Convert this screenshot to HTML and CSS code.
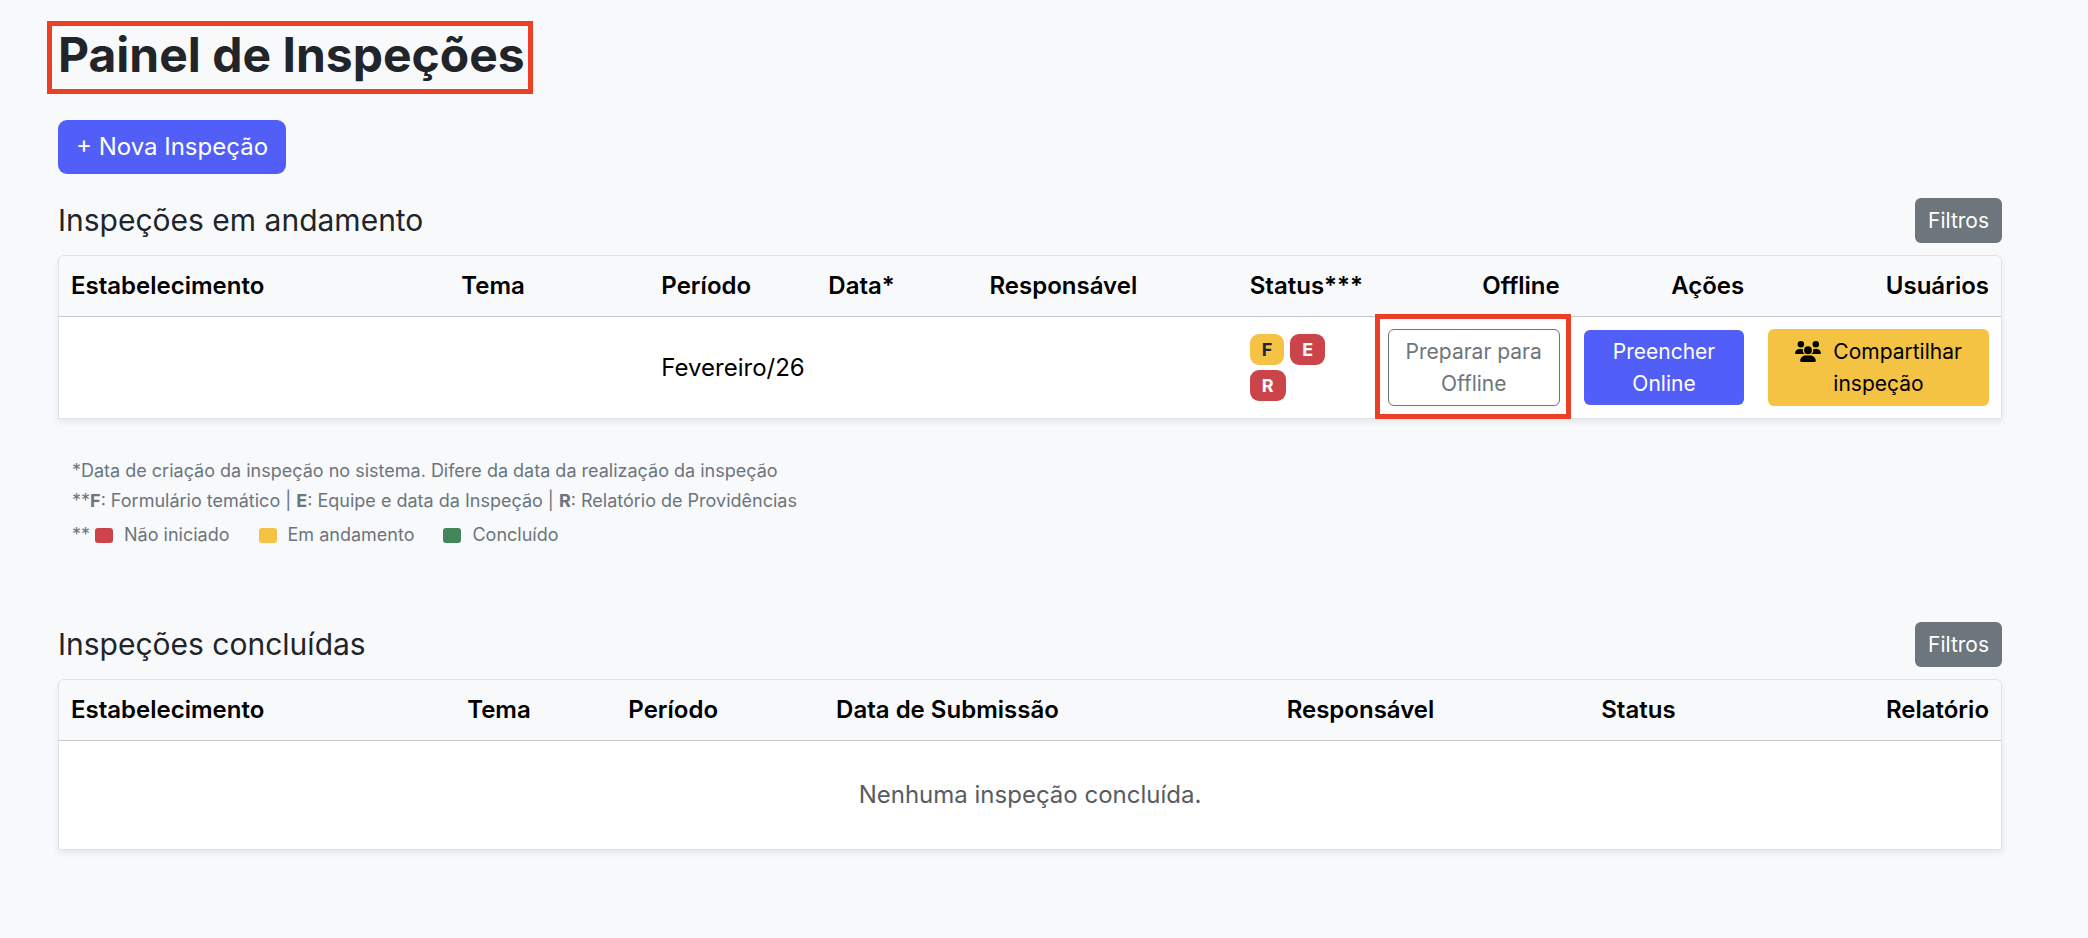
FILE: index.html
```html
<!DOCTYPE html>
<html lang="pt-BR">
<head>
<meta charset="utf-8">
<meta name="viewport" content="width=device-width, initial-scale=1">
<title>Painel de Inspeções</title>
<link rel="stylesheet" href="styles.css">
</head>
<body>
<main class="page">
  <h1 class="page-title">Painel de Inspeções</h1>
  <div><button type="button" class="btn btn-primary btn-lg">+ Nova Inspeção</button></div>

  <section class="panel">
    <header class="panel-head">
      <h2 class="panel-title" id="ongoing">Inspeções em andamento</h2>
      <button type="button" class="btn btn-secondary">Filtros</button>
    </header>
    <table class="grid" aria-labelledby="ongoing">
      <colgroup>
        <col class="a-place"><col class="a-theme"><col class="a-period"><col class="a-date"><col class="a-owner"><col class="a-status"><col class="a-offline"><col class="a-actions"><col>
      </colgroup>
      <thead>
        <tr>
          <th scope="col">Estabelecimento</th>
          <th scope="col">Tema</th>
          <th scope="col">Período</th>
          <th scope="col">Data*</th>
          <th scope="col">Responsável</th>
          <th scope="col">Status***</th>
          <th scope="col" class="end">Offline</th>
          <th scope="col" class="end">Ações</th>
          <th scope="col" class="end">Usuários</th>
        </tr>
      </thead>
      <tbody>
        <tr>
          <td></td>
          <td></td>
          <td>Fevereiro/26</td>
          <td></td>
          <td></td>
          <td>
            <div class="badges">
              <span class="badge warning">F</span>
              <span class="badge danger">E</span>
              <span class="badge danger">R</span>
            </div>
          </td>
          <td><div class="highlight"><button type="button" class="btn btn-outline btn-block">Preparar para Offline</button></div></td>
          <td><button type="button" class="btn btn-primary btn-block">Preencher Online</button></td>
          <td>
            <button type="button" class="btn btn-warning btn-block btn-share">
              <svg class="icon" viewBox="0 0 640 512" aria-hidden="true"><path fill="currentColor" d="M144 0a80 80 0 1 1 0 160A80 80 0 1 1 144 0zM512 0a80 80 0 1 1 0 160A80 80 0 1 1 512 0zM0 298.7C0 239.8 47.8 192 106.7 192h42.7c15.9 0 31 3.5 44.6 9.7c-1.3 7.2-1.9 14.7-1.9 22.3c0 38.2 16.8 72.5 43.3 96c-.2 0-.4 0-.7 0H21.3C9.6 320 0 310.4 0 298.7zM405.3 320c-.2 0-.4 0-.7 0c26.6-23.5 43.3-57.8 43.3-96c0-7.6-.7-15-1.9-22.3c13.6-6.3 28.7-9.7 44.6-9.7h42.7C592.2 192 640 239.8 640 298.7c0 11.8-9.6 21.3-21.3 21.3H405.3zM224 224a96 96 0 1 1 192 0 96 96 0 1 1 -192 0zM128 485.3C128 411.7 187.7 352 261.3 352H378.7C452.3 352 512 411.7 512 485.3c0 14.7-11.9 26.7-26.7 26.7H154.7c-14.7 0-26.7-11.9-26.7-26.7z"/></svg>
              <span>Compartilhar<br>inspeção</span>
            </button>
          </td>
        </tr>
      </tbody>
    </table>
    <div class="notes">
      <p>*Data de criação da inspeção no sistema. Difere da data da realização da inspeção</p>
      <p>**<b>F</b>: Formulário temático | <b>E</b>: Equipe e data da Inspeção | <b>R</b>: Relatório de Providências</p>
      <div class="legend">
        <span class="legend-mark">**</span>
        <span class="legend-item"><i class="swatch danger"></i>Não iniciado</span>
        <span class="legend-item"><i class="swatch warning"></i>Em andamento</span>
        <span class="legend-item"><i class="swatch success"></i>Concluído</span>
      </div>
    </div>
  </section>

  <section class="panel">
    <header class="panel-head">
      <h2 class="panel-title" id="finished">Inspeções concluídas</h2>
      <button type="button" class="btn btn-secondary">Filtros</button>
    </header>
    <table class="grid" aria-labelledby="finished">
      <colgroup>
        <col class="b-place"><col class="b-theme"><col class="b-period"><col class="b-date"><col class="b-owner"><col class="b-status"><col>
      </colgroup>
      <thead>
        <tr>
          <th scope="col">Estabelecimento</th>
          <th scope="col">Tema</th>
          <th scope="col">Período</th>
          <th scope="col">Data de Submissão</th>
          <th scope="col">Responsável</th>
          <th scope="col">Status</th>
          <th scope="col" class="end">Relatório</th>
        </tr>
      </thead>
      <tbody>
        <tr><td colspan="7" class="empty">Nenhuma inspeção concluída.</td></tr>
      </tbody>
    </table>
  </section>
</main>
</body>
</html>
```
FILE: styles.css
```css
*, *::before, *::after { box-sizing: border-box; }

body {
  margin: 0;
  background: #f8f9fb;
  color: #212529;
  font-family: Inter, "Liberation Sans", sans-serif;
  font-size: 24px;
  line-height: 36px;
}

h1, h2, p { margin: 0; }

.page { padding: 24px 86px 48px 58px; }

.page-title {
  position: relative;
  width: fit-content;
  margin-bottom: 34px;
  font-size: 48px;
  font-weight: 700;
  line-height: 62px;
}

.page-title::after,
.highlight::after {
  content: "";
  position: absolute;
  border: 5px solid #ec4026;
  pointer-events: none;
}

.page-title::after { inset: -3px -8px -8px -11px; }

.highlight { position: relative; }
.highlight::after { inset: -15px -11px -13px -13px; }

.btn {
  display: inline-block;
  padding: 6px 12px 5px;
  border: 0;
  border-radius: 6px;
  font: inherit;
  font-size: 21px;
  line-height: 32px;
  cursor: pointer;
}

.btn-lg { display: block; padding: 11px 18px; border-radius: 9px; font-size: 24px; }
.btn-block { display: block; width: 100%; }
.btn-primary { background: #525ef8; color: #fff; }
.btn-secondary { padding: 7px 13px 6px; background: #6d757d; color: #fff; }
.btn-outline { border: 1px solid #6c757d; background: transparent; color: #6c757d; }
.btn-warning { padding: 7px 12px 6px; background: #f5c344; color: #000; }

.btn-share {
  display: flex;
  justify-content: center;
  align-items: flex-start;
  gap: 12px;
  text-align: left;
  white-space: nowrap;
}

.icon { flex: none; width: 26px; height: 21px; margin-top: 5px; }

.panel { margin-top: 24px; }

.panel-head {
  display: flex;
  justify-content: space-between;
  align-items: center;
  margin-bottom: 12px;
}

.panel-title { padding-bottom: 2px; font-size: 30px; font-weight: 400; line-height: 36px; }

.grid {
  width: 100%;
  table-layout: fixed;
  border-collapse: separate;
  border-spacing: 0;
  border: 1px solid #dfe2e6;
  border-radius: 6px 6px 0 0;
  background: #fff;
  box-shadow: 0 3px 6px rgba(0, 0, 0, 0.08);
  color: #000;
}

.grid th, .grid td { padding: 12px; text-align: left; vertical-align: middle; }
.grid th { border-bottom: 1px solid #c6c7c8; background: #f8f9fb; font-weight: 600; }
.grid th:first-child { border-top-left-radius: 6px; }
.grid th:last-child { border-top-right-radius: 6px; }
.grid .end { text-align: right; }
.grid .empty { padding: 36px 12px; color: #595c5f; text-align: center; }

.a-place { width: 20.1%; }
.a-theme { width: 10.3%; }
.a-period { width: 8.6%; }
.a-date { width: 8.3%; }
.a-owner { width: 13.4%; }
.a-status { width: 7.1%; }
.a-offline { width: 10.1%; }
.a-actions { width: 9.5%; }

.b-place { width: 20.4%; }
.b-theme { width: 8.3%; }
.b-period { width: 10.7%; }
.b-date { width: 23.2%; }
.b-owner { width: 16.2%; }
.b-status { width: 10%; }

.badges { display: flex; flex-wrap: wrap; gap: 5px 6px; }

.badge {
  padding: 6px 12px;
  border-radius: 9px;
  font-size: 18px;
  font-weight: 700;
  line-height: 19px;
}

.danger { background: #cb444a; color: #fff; }
.warning { background: #f5c344; color: #212529; }
.success { background: #42865a; }

.notes {
  padding: 37px 14px 0;
  color: #6c757d;
  font-size: 18px;
  line-height: 30px;
}

.legend { display: flex; align-items: center; margin-top: 4px; }
.legend-mark { margin-right: 5px; }
.legend-item { display: flex; align-items: center; gap: 11px; margin-right: 29px; }
.swatch { width: 18px; height: 15px; border-radius: 3px; }

.panel + .panel { margin-top: 72px; }
```
